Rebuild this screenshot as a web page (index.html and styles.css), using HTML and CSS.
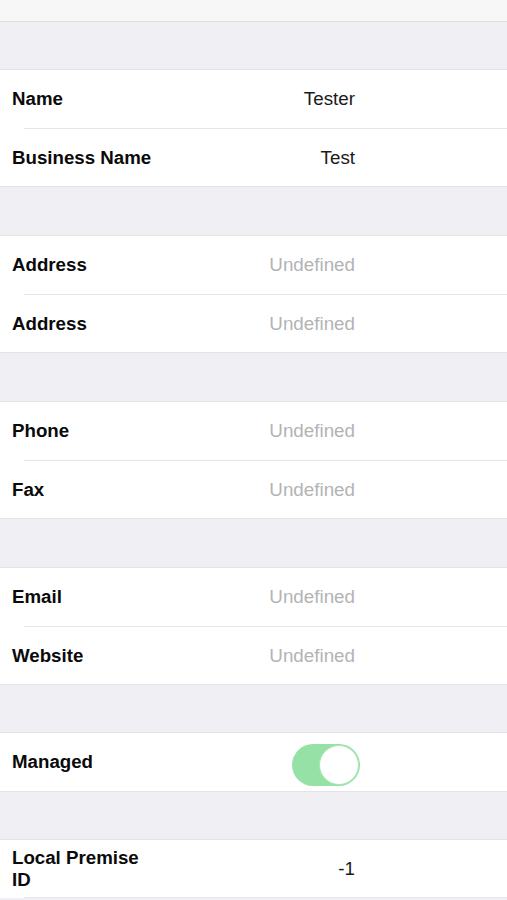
FILE: index.html
```html
<!DOCTYPE html>
<html>
<head>
<meta charset="utf-8">
<link rel="stylesheet" href="styles.css">
</head>
<body>
<div class="topbar"></div>
<div class="gap short"></div>
<div class="section">
  <div class="row"><div class="label">Name</div><div class="value">Tester</div></div>
  <div class="row"><div class="label">Business Name</div><div class="value">Test</div></div>
</div>
<div class="gap"></div>
<div class="section">
  <div class="row"><div class="label">Address</div><div class="value placeholder">Undefined</div></div>
  <div class="row"><div class="label">Address</div><div class="value placeholder">Undefined</div></div>
</div>
<div class="gap"></div>
<div class="section">
  <div class="row"><div class="label">Phone</div><div class="value placeholder">Undefined</div></div>
  <div class="row"><div class="label">Fax</div><div class="value placeholder">Undefined</div></div>
</div>
<div class="gap"></div>
<div class="section">
  <div class="row"><div class="label">Email</div><div class="value placeholder">Undefined</div></div>
  <div class="row"><div class="label">Website</div><div class="value placeholder">Undefined</div></div>
</div>
<div class="gap short"></div>
<div class="section">
  <div class="row"><div class="label">Managed</div><div class="value"><span class="switch"><span class="knob"></span></span></div></div>
</div>
<div class="gap short"></div>
<div class="section open">
  <div class="row"><div class="label">Local Premise ID</div><div class="value">-1</div></div>
</div>
</body>
</html>
```
FILE: styles.css
```css
html, body {
  margin: 0;
  padding: 0;
  background: #efeff4;
  font-family: "Liberation Sans", Arial, sans-serif;
  overflow: hidden;
}
.topbar {
  height: 21px;
  background: #f7f7f7;
  border-bottom: 1px solid #dedee2;
}
.gap {
  height: 48px;
}
.gap.short {
  height: 47px;
}
.section {
  background: #ffffff;
  border-top: 1px solid #e3e3e6;
  border-bottom: 1px solid #e3e3e6;
}
.section.open {
  border-bottom: none;
}
.row {
  height: 58px;
  display: flex;
  align-items: center;
  padding-left: 12px;
  position: relative;
}
.row + .row::before {
  content: "";
  position: absolute;
  top: -1px;
  left: 24px;
  right: 0;
  height: 1px;
  background: #e6e6e9;
}
.section.open .row::after {
  content: "";
  position: absolute;
  bottom: 0;
  left: 24px;
  right: 0;
  height: 1px;
  background: #e6e6e9;
}
.row + .row {
  border-top: 1px solid transparent;
  height: 57px;
}
.label {
  width: 145px;
  font-weight: bold;
  font-size: 18.7px;
  line-height: 22px;
  color: #0a0a0a;
}
.value {
  width: 198px;
  text-align: right;
  font-size: 18.8px;
  color: #1a1a1a;
  display: flex;
  justify-content: flex-end;
}
.placeholder {
  color: #b3b3b6;
}
.switch {
  width: 68px;
  height: 42px;
  border-radius: 21px;
  background: #95e1a6;
  position: relative;
  display: block;
  margin-right: -5px;
  margin-top: 6px;
}
.knob {
  position: absolute;
  right: 1px;
  top: 1px;
  width: 38px;
  height: 38px;
  border-radius: 50%;
  background: #ffffff;
  border: 1px solid #a8e6b5;
}
```
